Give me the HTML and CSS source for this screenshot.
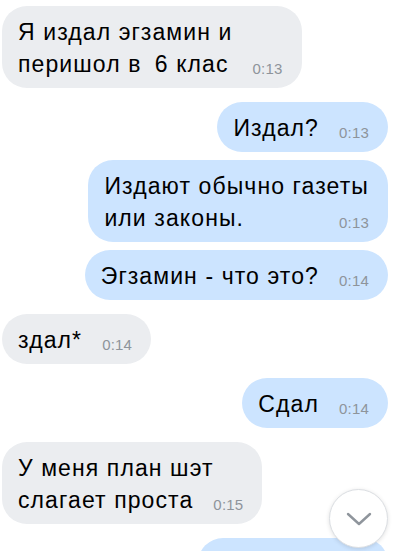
FILE: index.html
```html
<!DOCTYPE html>
<html lang="ru">
<head>
    <meta charset="UTF-8">
    <meta name="viewport" content="width=device-width, initial-scale=1.0">
    <title>Диалог</title>
    <link rel="stylesheet" href="styles.css">
</head>
<body>
    <div class="chat">
        <div class="group in">
            <div class="msg">
                <div>Я издал эгзамин и</div>
                <div class="line">перишол в&thinsp; 6 клас<span class="time gap">0:13</span></div>
            </div>
        </div>

        <div class="group out">
            <div class="msg">
                <div class="line">Издал?<span class="time">0:13</span></div>
            </div>
            <div class="msg">
                <div>Издают обычно газеты</div>
                <div class="line">или законы.<span class="time">0:13</span></div>
            </div>
            <div class="msg">
                <div class="line">Эгзамин - что это?<span class="time">0:14</span></div>
            </div>
        </div>

        <div class="group in">
            <div class="msg">
                <div class="line">здал*<span class="time">0:14</span></div>
            </div>
        </div>

        <div class="group out">
            <div class="msg">
                <div class="line">Сдал<span class="time">0:14</span></div>
            </div>
        </div>

        <div class="group in">
            <div class="msg">
                <div>У меня план шэт</div>
                <div class="line">слагает проста<span class="time">0:15</span></div>
            </div>
        </div>

        <div class="group out">
            <div class="msg last">&nbsp;<br>&nbsp;</div>
        </div>
    </div>

    <button class="scroll-down" aria-label="Вниз">
        <svg width="26" height="14" viewBox="0 0 26 14">
            <polyline points="2,2 13,12 24,2" fill="none" stroke="#8f959c" stroke-width="2.4" stroke-linecap="round" stroke-linejoin="round"/>
        </svg>
    </button>
</body>
</html>
```

FILE: styles.css
```css
html, body {
    height: 100%;
}
body {
    font-family: "Liberation Sans", Arial, sans-serif;
    background-color: #fff;
    color: #000;
    margin: 0;
    overflow: hidden;
    position: relative;
}
.chat {
    display: flex;
    flex-direction: column;
    gap: 14px;
    padding: 6px 12px 0 2px;
}
.group {
    display: flex;
    flex-direction: column;
    gap: 8px;
}
.group.in {
    align-items: flex-start;
}
.group.out {
    align-items: flex-end;
}
.msg {
    font-size: 23px;
    letter-spacing: 1.1px;
    line-height: 32px;
    padding: 10px 19px 8px 16px;
    border-radius: 25px;
    white-space: nowrap;
}
.in .msg {
    background-color: #ebedf0;
}
.out .msg {
    background-color: #cce4ff;
}
.line {
    display: flex;
    justify-content: space-between;
    align-items: baseline;
}
.time {
    margin-left: 20px;
    font-size: 15px;
    line-height: 16px;
    letter-spacing: 0.2px;
    color: #8e949b;
    transform: translateY(2px);
}
.time.gap {
    margin-left: 24px;
}
.msg.last {
    width: 155px;
}
.scroll-down {
    position: absolute;
    left: 329px;
    top: 489px;
    width: 59px;
    height: 59px;
    padding: 0;
    border: 1px solid #dcdfe3;
    border-radius: 50%;
    background: #fff;
    box-shadow: 0 1px 4px rgba(0,0,0,0.12);
    display: flex;
    align-items: center;
    justify-content: center;
}
```
